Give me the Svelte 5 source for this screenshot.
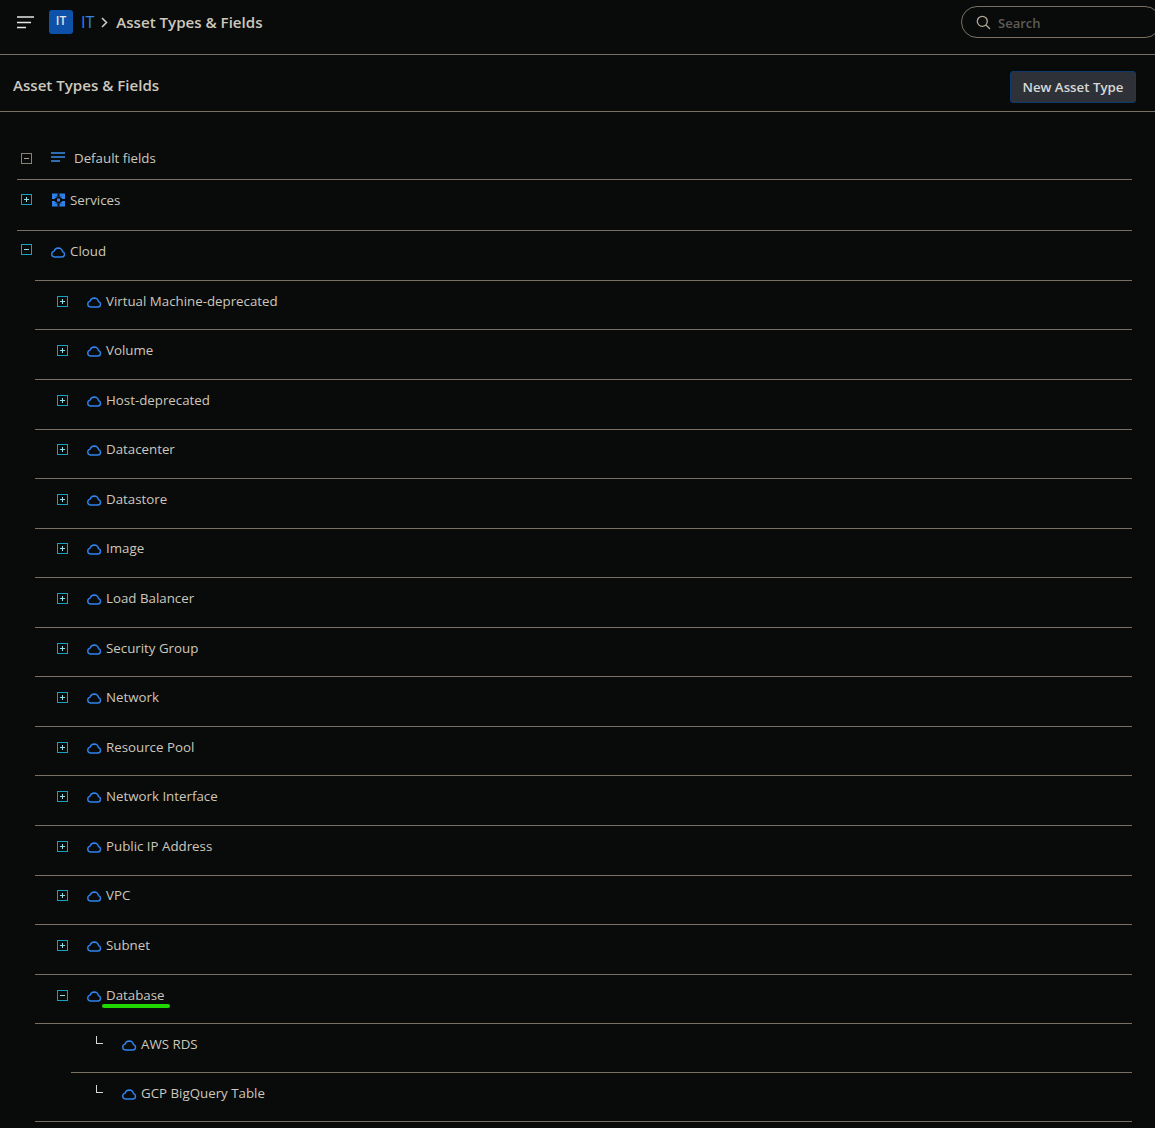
<script>
	const cloudChildren = [
		'Virtual Machine-deprecated',
		'Volume',
		'Host-deprecated',
		'Datacenter',
		'Datastore',
		'Image',
		'Load Balancer',
		'Security Group',
		'Network',
		'Resource Pool',
		'Network Interface',
		'Public IP Address',
		'VPC',
		'Subnet'
	];
	const databaseChildren = ['AWS RDS', 'GCP BigQuery Table'];
</script>

{#snippet cloud()}
	<svg class="icon" width="15" height="11" viewBox="0 0 15 11" fill="none" stroke="#2f84ee" stroke-width="1.4">
		<path transform="translate(-0.4 0)" d="M3.800 10h7.500a2.700 2.700 0 0 0 .6-5.300A4.500 4.500 0 0 0 7.600 1 4.300 4.300 0 0 0 3.500 4.100 3 3 0 0 0 3.800 10z" />
	</svg>
{/snippet}

{#snippet toggle(open, muted = false)}
	<span class="toggle" class:muted class:closed={!open}></span>
{/snippet}

<div class="page">
	<header class="topbar">
		<svg class="burger" width="17" height="13" viewBox="0 0 17 13" stroke="#e6e6e6" stroke-width="1.3">
			<path d="M0 1h17M0 6.500h14M0 11.500h9" />
		</svg>
		<span class="badge">IT</span>
		<span class="crumb-root">IT</span>
		<svg class="chevron" width="7" height="11" viewBox="0 0 7 11" fill="none" stroke="#cfcfcf" stroke-width="1.5">
			<path d="M1 1l4.500 4.500L1 10" />
		</svg>
		<span class="crumb">Asset Types &amp; Fields</span>
		<div class="search">
			<svg width="15" height="15" viewBox="0 0 15 15" fill="none" stroke="#b5a996" stroke-width="1.3">
				<circle cx="6.300" cy="6.300" r="5" />
				<path d="M10 10l4 4" />
			</svg>
			<span class="search-text">Search</span>
		</div>
	</header>

	<div class="titlebar">
		<h1>Asset Types &amp; Fields</h1>
		<button>New Asset Type</button>
	</div>

	<div class="tree">
		<div class="row first">
			{@render toggle(true, true)}
			<svg class="icon lines" width="15" height="11" viewBox="0 0 15 11" stroke="#3b8fe8" stroke-width="1.4">
				<path d="M0 1h14M0 5h14M0 9h9" />
			</svg>
			<span class="label">Default fields</span>
		</div>
		<div class="row services">
			{@render toggle(false)}
			<svg class="icon" width="15" height="14" viewBox="0 0 15 14">
				<rect x="1" y="0.500" width="13" height="13" fill="#2f80e8" />
				<path d="M4 3.500h7v7H4z" fill="#0a0c0c" />
				<path d="M6.500 0.500h2v3h-2zM6.500 10.500h2v3h-2zM1 6h3v2H1zM11 6h3v2h-3z" fill="#0a0c0c" />
				<path d="M6 5.500h3v3H6zM4 3.500h1.500V5H4zM9.500 3.500H11V5H9.500zM4 9h1.500v1.500H4zM9.500 9H11v1.500H9.500z" fill="#2f80e8" />
			</svg>
			<span class="label">Services</span>
		</div>
		<div class="row cloud-root">
			{@render toggle(true)}
			{@render cloud()}
			<span class="label">Cloud</span>
		</div>

		<div class="children">
			{#each cloudChildren as name}
				<div class="row child">
					{@render toggle(false)}
					{@render cloud()}
					<span class="label">{name}</span>
				</div>
			{/each}

			<div class="row child">
				{@render toggle(true)}
				{@render cloud()}
				<span class="label highlighted">Database</span>
			</div>

			<div class="leaves">
				{#each databaseChildren as name}
					<div class="row leaf">
						<span class="elbow"></span>
						{@render cloud()}
						<span class="label">{name}</span>
					</div>
				{/each}
			</div>
		</div>
	</div>
</div>

<style>
	:global(body) {
		background: #090b0b;
	}

	.page {
		height: 1128px;
		overflow: hidden;
		background: #090b0b;
		color: #cdc7bc;
		font-family: 'Open Sans', 'Noto Sans', sans-serif;
		font-size: 13.300px;
	}

	.topbar {
		display: flex;
		align-items: center;
		height: 44px;
		padding: 0 0 10px 17px;
		border-bottom: 1px solid #7a7064;
	}

	.burger {
		margin-right: 15px;
	}

	.badge {
		display: flex;
		align-items: center;
		justify-content: center;
		width: 24px;
		height: 24px;
		margin-right: 8px;
		padding-bottom: 3px;
		box-sizing: border-box;
		border-radius: 3px;
		background: #0d52a8;
		color: #e4e4e4;
		font-size: 12px;
		font-weight: 600;
	}

	.crumb-root {
		margin-right: 7px;
		color: #2f86e6;
		font-size: 16px;
	}

	.chevron {
		margin-right: 8px;
	}

	.crumb {
		margin-bottom: 1px;
		font-size: 15.100px;
		font-weight: 600;
	}

	.search {
		display: flex;
		align-items: center;
		gap: 7px;
		width: 200px;
		height: 32px;
		margin-left: auto;
		margin-right: -6px;
		padding-left: 14px;
		box-sizing: border-box;
		border: 1px solid #7a7064;
		border-radius: 16px;
		color: #5f5c56;
		font-size: 13px;
		font-weight: 600;
	}

	.search-text {
		margin-top: 2px;
	}

	.titlebar {
		display: flex;
		align-items: center;
		justify-content: space-between;
		height: 56px;
		padding: 0 19px 0 13px;
		border-bottom: 1px solid #7a7064;
	}

	h1 {
		margin: 4px 0 0;
		font-size: 15.100px;
		font-weight: 600;
	}

	button {
		width: 126px;
		height: 32px;
		margin-top: 7px;
		padding: 0;
		border: 1px solid #0e3a6e;
		border-radius: 3px;
		background: #2e3238;
		color: #d8d8d8;
		font-family: inherit;
		font-size: 13.300px;
		font-weight: 600;
	}

	.tree {
		margin: 0 23px 0 17px;
	}

	.row {
		display: flex;
		align-items: center;
		box-sizing: border-box;
		height: 49.5625px;
		padding-bottom: 8.930px;
		padding-left: 4px;
		border-bottom: 1px solid #7a7064;
	}

	.first {
		height: 68px;
		padding-top: 26px;
		padding-bottom: 2px;
	}

	.services {
		height: 51px;
		padding-bottom: 11px;
	}

	.cloud-root {
		height: 48.84375px;
		padding-bottom: 9px;
		border-bottom: none;
	}

	.children {
		margin-left: 18px;
		border-top: 1px solid #7a7064;
		border-bottom: 1px solid #7a7064;
	}

	.child {
		padding-left: 22px;
	}

	.leaves {
		margin-left: 36px;
	}

	.leaf {
		height: 49px;
		padding-left: 25px;
	}

	.leaf:last-child {
		height: 48px;
		border-bottom: none;
	}

	.toggle {
		position: relative;
		flex: none;
		width: 11px;
		height: 11px;
		margin-right: 19px;
		box-sizing: border-box;
		border: 1px solid #17a2c4;
		color: #8fdde8;
	}

	.toggle::before,
	.toggle.closed::after {
		content: '';
		position: absolute;
		background: currentColor;
	}

	.toggle::before {
		left: 2px;
		top: 4px;
		width: 5px;
		height: 1px;
	}

	.toggle.closed::after {
		left: 4px;
		top: 2px;
		width: 1px;
		height: 5px;
	}

	.toggle.muted {
		margin-top: 2px;
		border-color: #8a8175;
		color: #a89f92;
	}

	.child .toggle {
		margin-top: 1px;
	}

	.services .toggle {
		margin-bottom: 1px;
	}

	.cloud-root .toggle {
		margin-bottom: 3px;
	}

	.icon {
		flex: none;
		margin-right: 4px;
		margin-top: 3px;
	}

	.lines {
		margin-right: 8px;
		margin-top: -1px;
	}

	.services .icon {
		margin-top: 1px;
	}

	.label {
		position: relative;
		line-height: 20px;
	}

	.highlighted::after {
		content: '';
		position: absolute;
		left: -4px;
		right: -5px;
		bottom: -3px;
		height: 4px;
		border-radius: 2px;
		background: #20d800;
	}

	.elbow {
		flex: none;
		width: 7px;
		height: 8px;
		margin-right: 19px;
		margin-bottom: 8px;
		border-left: 1px solid #d8d8d8;
		border-bottom: 1px solid #d8d8d8;
		box-sizing: border-box;
	}
</style>
